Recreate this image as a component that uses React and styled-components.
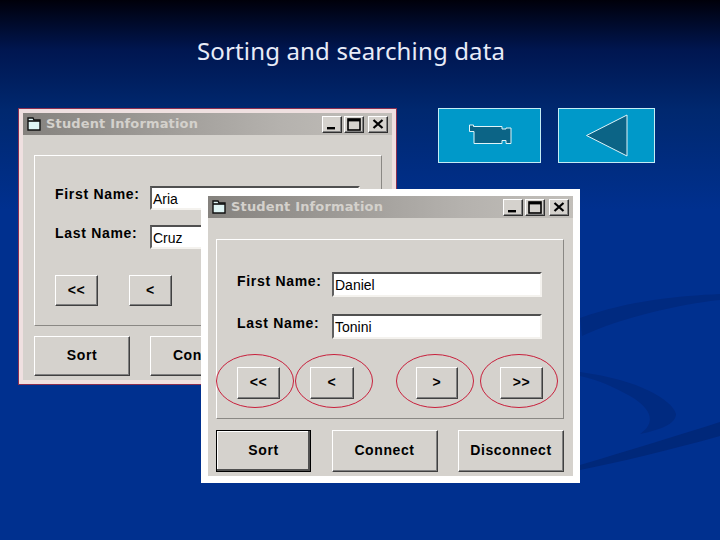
import React from "react";
import styled, { createGlobalStyle } from "styled-components";

const GlobalStyle = createGlobalStyle`
  html, body {
    margin: 0;
    padding: 0;
    background: #00308f;
  }
`;

const Slide = styled.div`
  position: relative;
  width: 720px;
  height: 540px;
  overflow: hidden;
  background: linear-gradient(180deg, #00000a 0, #001650 50px, #00286f 110px, #00308f 210px, #00308f 100%);
`;

const Swooshes = styled.svg`
  position: absolute;
  left: 0;
  top: 0;
`;

const Heading = styled.h1`
  position: relative;
  margin: 0;
  height: 108px;
  box-sizing: border-box;
  padding: 36px 0 0 197px;
  font: 400 24px/30px "Noto Sans", sans-serif;
  letter-spacing: 0.15px;
  color: #e8ecf8;
`;

const ActionBar = styled.div`
  position: relative;
  display: flex;
  gap: 17px;
  margin-left: 438px;
`;

const ActionButton = styled.div`
  display: flex;
  align-items: center;
  justify-content: center;
  box-sizing: border-box;
  width: ${(p) => p.$width}px;
  height: 55px;
  background: #0099c9;
  border: 1px solid #c4ecf4;
`;

const Win = styled.div`
  position: absolute;
  left: ${(p) => p.$left}px;
  top: ${(p) => p.$top}px;
  width: 379px;
  box-sizing: border-box;
  border: ${(p) => (p.$front ? "7px solid #fff" : "5px solid #efe0e0")};
  outline: ${(p) => (p.$front ? "none" : "1px solid #8c2f50")};
  outline-offset: -1px;
  background: #d5d2cd;
  font-family: "Liberation Sans", Arial, sans-serif;
  color: #000;
`;

const TitleBar = styled.div`
  display: flex;
  align-items: center;
  height: 22px;
  padding: 0 4px 0 3px;
  background: linear-gradient(90deg, #85827e, #b5b2ae 70%, #c2bfba);
`;

const TitleText = styled.span`
  flex: 1;
  margin-left: 4px;
  font: 700 13px/22px "DejaVu Sans", sans-serif;
  letter-spacing: 0.15px;
  color: #d4d1cc;
`;

const CaptionButton = styled.div`
  display: flex;
  align-items: center;
  justify-content: center;
  box-sizing: border-box;
  width: 20px;
  height: 17px;
  margin-left: ${(p) => p.$gap}px;
  background: #d5d2cd;
  border: 1px solid;
  border-color: #fff #303030 #303030 #fff;
  box-shadow: inset -1px -1px 0 #808080;
`;

const Body = styled.div`
  display: flex;
  flex-direction: column;
  padding: ${(p) => p.$pad};
`;

const GroupBox = styled.div`
  box-sizing: border-box;
  height: ${(p) => p.$height}px;
  padding: ${(p) => p.$pad};
  border: 1px solid;
  border-color: #fff #8a8884 #8a8884 #fff;
  display: flex;
  flex-direction: column;
`;

const FieldRow = styled.div`
  display: flex;
  align-items: center;
  height: ${(p) => p.$height}px;
  margin-bottom: ${(p) => p.$gap}px;
`;

const FieldLabel = styled.label`
  width: ${(p) => p.$width}px;
  flex: none;
  font: 700 14px/18px "Liberation Sans", Arial, sans-serif;
  letter-spacing: 0.7px;
  position: relative;
  top: -4px;
`;

const FieldInput = styled.div`
  box-sizing: border-box;
  width: 210px;
  height: 100%;
  padding: 2px 0 0 1px;
  background: #fff;
  border: 2px solid;
  border-color: #505050 #f4f2ee #f4f2ee #606060;
  font: 400 14px/18px "Liberation Sans", Arial, sans-serif;
`;

const NavRow = styled.div`
  display: grid;
  grid-template-columns: ${(p) => p.$cols};
  height: ${(p) => p.$height}px;
`;

const WinButton = styled.div`
  display: flex;
  align-items: center;
  justify-content: center;
  box-sizing: border-box;
  width: ${(p) => p.$width}px;
  height: 100%;
  padding-bottom: 2px;
  background: #d5d2cd;
  border: 1px solid;
  border-color: ${(p) => (p.$default ? "#000" : "#fff #404040 #404040 #fff")};
  box-shadow: ${(p) =>
    p.$default
      ? "inset -2px -2px 0 #505050, inset 1px 1px 0 #fff"
      : "inset -1px -1px 0 #808080"};
  font: 700 14px/18px "Liberation Sans", Arial, sans-serif;
  letter-spacing: 0.6px;
`;

const ButtonRow = styled.div`
  display: flex;
  justify-content: space-between;
  height: ${(p) => p.$height}px;
  margin-top: ${(p) => p.$gap}px;
`;

const Ring = styled.svg`
  position: absolute;
  left: ${(p) => p.$left}px;
  top: 158px;
  overflow: visible;
`;

const WindowIcon = () => (
  <svg width="16" height="14" viewBox="0 0 16 14">
    <path d="M2 1h5l1 2h6v10H2z" fill="#dff4f4" stroke="#101010" strokeWidth="1.4" />
    <path d="M2 4h12" stroke="#101010" strokeWidth="1.6" />
  </svg>
);

const MinGlyph = () => (
  <svg width="12" height="11" viewBox="0 0 12 11">
    <rect x="1" y="8" width="8" height="2.4" fill="#000" />
  </svg>
);

const MaxGlyph = () => (
  <svg width="14" height="13" viewBox="0 0 14 13">
    <rect x="1" y="1" width="12" height="11" fill="none" stroke="#000" strokeWidth="1.6" />
    <rect x="1" y="1" width="12" height="2.4" fill="#000" />
  </svg>
);

const CloseGlyph = () => (
  <svg width="12" height="10" viewBox="0 0 12 10">
    <path d="M1.5 1l9 8M10.5 1l-9 8" stroke="#000" strokeWidth="2.2" />
  </svg>
);

const layouts = {
  back: {
    left: 18,
    top: 108,
    bodyPad: "20px 10px 4px 11px",
    groupHeight: 171,
    groupPad: "30px 0 0 20px",
    labelWidth: 95,
    fieldHeight: 24,
    fieldGap: 15,
    navGap: 26,
    navHeight: 31,
    navCols: "74px 106px 84px 43px",
    navWidths: [43, 43, 43, 43],
    rowGap: 10,
    rowHeight: 40,
    actions: [96, 106, 106],
  },
  front: {
    left: 201,
    top: 189,
    bodyPad: "21px 9px 4px 8px",
    groupHeight: 180,
    groupPad: "32px 0 0 20px",
    labelWidth: 95,
    fieldHeight: 25,
    fieldGap: 17,
    navGap: 28,
    navHeight: 32,
    navCols: "73px 106px 84px 43px",
    navWidths: [43, 44, 42, 43],
    rowGap: 11,
    rowHeight: 42,
    actions: [95, 106, 106],
  },
};

const rings = [216, 295, 396, 480];

const StudentWindow = ({ kind, first, last, sortDefault, children }) => {
  const l = layouts[kind];
  return (
    <Win $left={l.left} $top={l.top} $front={kind === "front"}>
      <TitleBar>
        <WindowIcon />
        <TitleText>Student Information</TitleText>
        <CaptionButton $gap={0}><MinGlyph /></CaptionButton>
        <CaptionButton $gap={2}><MaxGlyph /></CaptionButton>
        <CaptionButton $gap={4}><CloseGlyph /></CaptionButton>
      </TitleBar>
      <Body $pad={l.bodyPad}>
        <GroupBox $height={l.groupHeight} $pad={l.groupPad}>
          <FieldRow $height={l.fieldHeight} $gap={l.fieldGap}>
            <FieldLabel $width={l.labelWidth}>First Name:</FieldLabel>
            <FieldInput>{first}</FieldInput>
          </FieldRow>
          <FieldRow $height={l.fieldHeight} $gap={l.navGap}>
            <FieldLabel $width={l.labelWidth}>Last Name:</FieldLabel>
            <FieldInput>{last}</FieldInput>
          </FieldRow>
          <NavRow $cols={l.navCols} $height={l.navHeight}>
            {["<<", "<", ">", ">>"].map((t, i) => (
              <WinButton key={t} $width={l.navWidths[i]}>{t}</WinButton>
            ))}
          </NavRow>
        </GroupBox>
        <ButtonRow $height={l.rowHeight} $gap={l.rowGap}>
          {["Sort", "Connect", "Disconnect"].map((t, i) => (
            <WinButton key={t} $width={l.actions[i]} $default={sortDefault && i === 0}>{t}</WinButton>
          ))}
        </ButtonRow>
      </Body>
      {children}
    </Win>
  );
};

export default function App() {
  return (
    <Slide>
      <GlobalStyle />
      <Swooshes width="720" height="540" viewBox="0 0 720 540">
        <path d="M580 318C630 300 680 296 720 294L720 300C680 304 620 318 582 336Z" fill="#002a80" />
        <path d="M580 372C640 380 672 400 676 414C676 424 660 430 640 434C655 424 654 410 630 396C615 388 600 380 580 376Z" fill="#002a80" />
        <path d="M580 465C630 450 680 435 720 422L720 436C670 450 620 462 580 470Z" fill="#00287a" />
      </Swooshes>
      <Heading>Sorting and searching data</Heading>
      <ActionBar>
        <ActionButton $width={103}>
          <svg width="44" height="26" viewBox="0 0 44 26">
            <path d="M1.5 2H5.5V3.5H34V6H38V5H43V20.5H38V17.5H34V20.5H6V8.5H1.5Z" fill="#0c6486" stroke="#dff4f8" strokeWidth="1" />
          </svg>
        </ActionButton>
        <ActionButton $width={97}>
          <svg width="44" height="44" viewBox="0 0 44 44">
            <path d="M1.5 21.5L42 1V42Z" fill="#0c6486" stroke="#dff4f8" strokeWidth="1" />
          </svg>
        </ActionButton>
      </ActionBar>
      <StudentWindow kind="back" first="Aria" last="Cruz" />
      <StudentWindow kind="front" first="Daniel" last="Tonini" sortDefault>
        {rings.map((x) => (
          <Ring key={x} $left={x - 208} width="78" height="54" viewBox="0 0 78 54">
            <ellipse cx="39" cy="27" rx="38.5" ry="26.5" fill="none" stroke="#c8203c" strokeWidth="1" />
          </Ring>
        ))}
      </StudentWindow>
    </Slide>
  );
}
